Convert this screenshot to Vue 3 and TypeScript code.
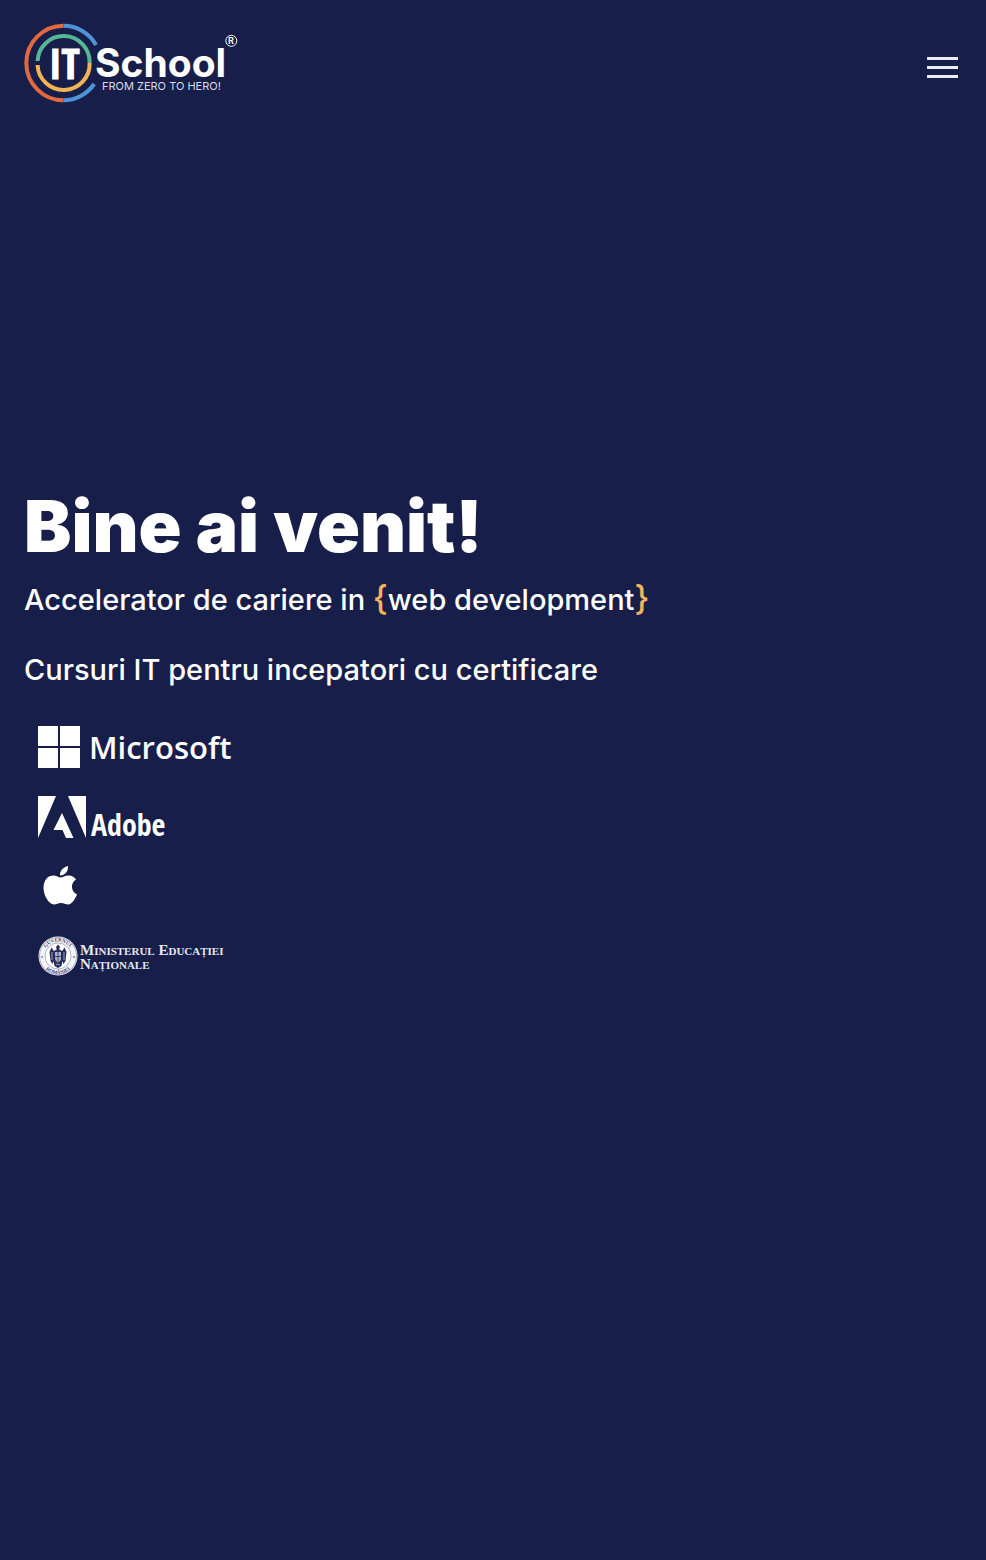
<script setup lang="ts">
import { ref } from 'vue'

const menuOpen = ref<boolean>(false)
</script>

<template>
  <div class="page">
    <header class="header">
      <a href="#" class="brand" aria-label="IT School">
        <svg class="brand-logo" viewBox="0 0 216 80" width="216" height="80">
          <g fill="none" stroke-width="4">
            <path stroke="#e2683f" d="M39.5 2.8A37.2 37.2 0 0 0 39.5 77.2" />
            <path stroke="#4f94d6" d="M39.5 2.8A37.2 37.2 0 0 1 72 22M39.5 77.2A37.2 37.2 0 0 0 70.2 61" />
            <path stroke="#56b796" d="M13.6 38A26 26 0 0 1 65.6 40" />
            <path stroke="#f2b356" d="M13.6 42A26 26 0 0 0 65.6 40" />
          </g>
          <text class="logo-it" x="25" y="56">IT</text>
          <text class="logo-school" x="71" y="54">School</text>
          <text class="logo-tag" x="78" y="67">FROM ZERO TO HERO!</text>
          <circle cx="207.3" cy="17.8" r="5.5" fill="none" stroke="#fff" stroke-width="1" />
          <text class="logo-reg" x="204" y="21">R</text>
        </svg>
      </a>
      <button
        type="button"
        class="menu"
        aria-label="Meniu"
        :aria-expanded="menuOpen"
        @click="menuOpen = !menuOpen"
      >
        <span class="bar"></span>
        <span class="bar"></span>
        <span class="bar"></span>
      </button>
    </header>

    <main class="hero">
      <h1 class="title">Bine ai venit!</h1>
      <p class="lead">Accelerator de cariere in <span class="brace">{</span>web development<span class="brace">}</span></p>
      <p class="lead">Cursuri IT pentru incepatori cu certificare</p>

      <ul class="partners">
        <li class="partner">
          <svg viewBox="0 0 200 42" width="200" height="42" fill="#fff">
            <path d="M0 0h20v20H0zM22 0h20v20H22zM0 22h20v20H0zM22 22h20v20H22z" />
            <text class="microsoft" x="51" y="33">Microsoft</text>
          </svg>
        </li>
        <li class="partner">
          <svg viewBox="0 0 200 42" width="200" height="42" fill="#fff">
            <path d="M0 0H18L0 42zM30 0H48V42zM24 17L35.500 42H28L24.500 34H15.500z" />
            <text class="adobe" x="53" y="40">Adobe</text>
          </svg>
        </li>
        <li class="partner">
          <svg viewBox="0 0 48 42" width="48" height="42" fill="#fff">
            <path d="M30 0C30.500 5 27 9.500 22 9.500C21.500 5 25.500 .8 30 0z" />
            <path d="M22.500 11.500C24.500 11.500 27 9.400 30.500 9.400C34 9.400 36.700 11.300 38 13.500C32 17 33 26 39 28.300C37.500 32.500 34 38.500 30 38.500C27.500 38.500 26 37 23 37C20 37 18.500 38.500 16 38.500C11 38.500 5.500 29.500 5.500 22C5.500 14 10 9.500 15.500 9.500C18.500 9.500 20.700 11.500 22.500 11.500z" />
          </svg>
        </li>
        <li class="partner ministry">
          <svg viewBox="0 0 40 40" width="40" height="40">
            <defs>
              <path id="arc-top" d="M5.500 20A14.500 14.500 0 0 1 34.500 20" />
              <path id="arc-bottom" d="M2 20A18 18 0 0 0 38 20" />
            </defs>
            <circle cx="20" cy="20" r="19.500" fill="#f3f4f8" />
            <circle cx="20" cy="20" r="18.500" fill="none" stroke="#7c81a0" stroke-width=".6" />
            <circle cx="20" cy="20" r="13" fill="#fff" stroke="#8d91ad" stroke-width=".7" />
            <text class="seal"><textPath href="#arc-top" startOffset="50%">GUVERNUL</textPath></text>
            <text class="seal"><textPath href="#arc-bottom" startOffset="50%">ROMÂNIEI</textPath></text>
            <path fill="#252c59" d="M20 8.500l2 2.500-.8 2.500 3 1.500 2.300-3.500L28.500 16l-1 9-2 3-1-3-1 5L20 32l-3.500-2-1-5-1 3-2-3-1-9 2-4.500 2.300 3.500 3-1.500-.8-2.500z" />
            <path fill="#aeb2c8" d="M17 16h6v6q0 3-3 4.500Q17 25 17 22z" />
            <path stroke="#252c59" stroke-width=".8" d="M20 16v10M17 20.500h6" />
            <path stroke="#d7d9e5" stroke-width=".7" d="M14 16v8M26 16v8M18 29l2-1 2 1" fill="none" />
            <circle cx="4" cy="21" r=".8" fill="#252c59" />
            <circle cx="36" cy="21" r=".8" fill="#252c59" />
          </svg>
          <span class="ministry-name">Ministerul Educației<br />Naționale</span>
        </li>
      </ul>
    </main>
  </div>
</template>

<style>
body {
  margin: 0;
  background: #171e49;
}
</style>

<style scoped>
.page {
  min-height: 100vh;
  background: #171e49;
  color: #fff;
  font-family: Inter, "Open Sans", sans-serif;
}
svg {
  overflow: visible;
}
.header {
  display: flex;
  justify-content: space-between;
  align-items: center;
  padding: 23px 24px;
}
.brand,
.brand-logo {
  display: block;
}
.brand-logo {
  fill: #fff;
}
.logo-it {
  font: 700 42px "Liberation Sans Narrow", "Open Sans Condensed", "DejaVu Sans Condensed", sans-serif;
  stroke: #fff;
  stroke-width: 1px;
}
.logo-school {
  font: 700 39px Inter, sans-serif;
}
.logo-tag {
  font: 400 11px Inter, sans-serif;
  fill: #d9dbe6;
}
.logo-reg {
  font: 600 9px Inter, sans-serif;
}
.menu {
  display: flex;
  flex-direction: column;
  gap: 6px;
  margin-top: 8px;
  padding: 4px;
  border: 0;
  background: none;
  cursor: pointer;
}
.bar {
  width: 31px;
  height: 3px;
  background: #ececf0;
}
.hero {
  padding: 353px 24px 24px;
}
.title {
  margin: 0 0 5px;
  font-size: 71px;
  font-weight: 900;
  line-height: 94px;
}
.lead {
  margin: 0 0 26px;
  font-size: 29px;
  font-weight: 500;
  line-height: 44px;
}
.brace {
  color: #f2b356;
  font-size: 34px;
  line-height: 1;
}
.partners {
  display: flex;
  flex-direction: column;
  gap: 28px;
  margin: 0;
  padding: 8px 14px;
  list-style: none;
}
.partner {
  display: flex;
  height: 42px;
}
.microsoft {
  font: 600 31px "Open Sans", sans-serif;
}
.adobe {
  font: 700 30px "Liberation Sans Narrow", "Open Sans Condensed", "DejaVu Sans Condensed", sans-serif;
}
.ministry {
  gap: 2px;
}
.ministry-name {
  padding-top: 7px;
  font: small-caps 700 15px/14px "Liberation Serif", serif;
  white-space: nowrap;
  color: #e6e7ee;
}
.seal {
  font: 700 5px "Liberation Serif", serif;
  fill: #3a406b;
  text-anchor: middle;
}
</style>
